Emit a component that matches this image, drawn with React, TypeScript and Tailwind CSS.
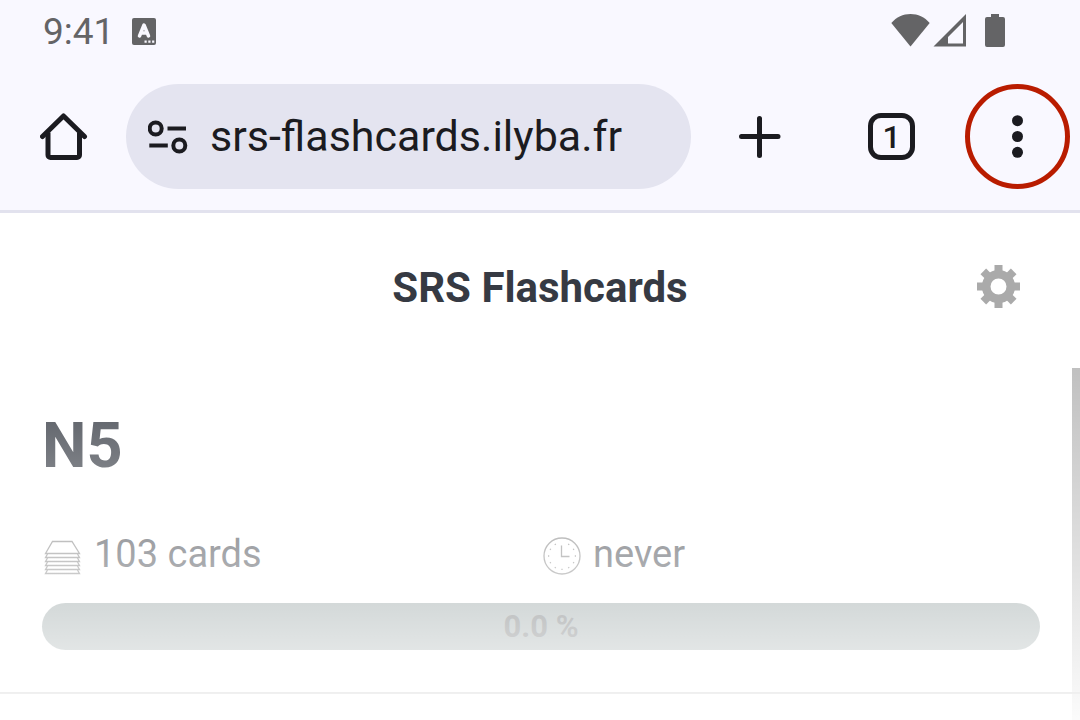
import React from "react";

function WifiIcon() {
  return (
    <svg viewBox="0 0 40 34" className="h-[34px] w-10" fill="#646466" aria-hidden="true">
      <path d="M20.500 33.500 1.300 10C6.500 4 13 1 20.500 1s14 3 19.200 9z" />
    </svg>
  );
}

function SignalIcon() {
  return (
    <svg viewBox="0 0 34 34" className="size-[34px]" aria-hidden="true">
      <path fill="#646466" fillRule="evenodd" d="M33 1v32.500H.5zM30 9 15 24v6.500h15z" />
    </svg>
  );
}

function BatteryIcon() {
  return (
    <svg viewBox="0 0 20 34" className="h-[34px] w-5" fill="#646466" aria-hidden="true">
      <path d="M6 1h8v3h4a2 2 0 0 1 2 2v26a2 2 0 0 1-2 2H2a2 2 0 0 1-2-2V6a2 2 0 0 1 2-2h4z" />
    </svg>
  );
}

function KeyboardIcon() {
  return (
    <svg viewBox="0 0 24 27" className="h-[27px] w-6" aria-hidden="true">
      <rect width="24" height="27" rx="2" fill="#646466" />
      <path d="M7.500 18 12 7l4.500 11M9 15h6" fill="none" stroke="#f9f8ff" strokeWidth="3.500" strokeLinecap="round" strokeLinejoin="round" />
      <path d="M12.500 22.500h2.200v2.200h-2.200zM16.300 22.500h2.200v2.200h-2.200zM20.100 22.500h2.200v2.200h-2.200z" fill="#f9f8ff" />
    </svg>
  );
}

function HomeIcon() {
  return (
    <svg viewBox="0 0 48 48" className="size-12" fill="none" stroke="#1b1b20" strokeWidth="5" aria-hidden="true">
      <path d="M8 19.500v22.500a2.500 2.500 0 0 0 2.500 2.500h26.500a2.500 2.500 0 0 0 2.500-2.500V19.500" />
      <path d="M2.500 23.500 23.500 3l21 20.500" strokeLinecap="round" strokeLinejoin="round" />
    </svg>
  );
}

function SiteInfoIcon() {
  return (
    <svg viewBox="0 0 40 34" className="h-[34px] w-10" fill="none" stroke="#1b1b20" strokeWidth="4" aria-hidden="true">
      <circle cx="7.700" cy="8.500" r="6" />
      <path d="M19.500 8.500H38M1.300 25.500h18.500" />
      <circle cx="31.300" cy="25.500" r="6" />
    </svg>
  );
}

function PlusIcon() {
  return (
    <svg viewBox="0 0 42 42" className="size-[42px]" fill="none" stroke="#1b1b20" strokeWidth="5" strokeLinecap="round" aria-hidden="true">
      <path d="M20.500 2.500v37M2.500 20.500h36.500" />
    </svg>
  );
}

function MoreIcon() {
  return (
    <svg viewBox="0 0 12 43" className="h-[43px] w-3" fill="#1b1b20" aria-hidden="true">
      <circle cx="5.500" cy="5.700" r="5.500" />
      <circle cx="5.500" cy="21.500" r="5.500" />
      <circle cx="5.500" cy="37.300" r="5.500" />
    </svg>
  );
}

const TEETH = [0, 45, 90, 135, 180, 225, 270, 315];

function GearIcon() {
  return (
    <svg viewBox="0 0 44 44" className="size-11" aria-hidden="true">
      <circle cx="22.500" cy="21.500" r="12.300" fill="none" stroke="#aaa" strokeWidth="8.600" />
      {TEETH.map((angle) => (
        <rect key={angle} x="18.500" y="0" width="8" height="8" fill="#aaa" transform={`rotate(${angle} 22.500 21.500)`} />
      ))}
    </svg>
  );
}

const SHEETS = [16, 20, 24, 28, 32];

function CardsIcon() {
  return (
    <svg viewBox="0 0 38 38" className="size-[38px]" fill="none" stroke="#777" strokeWidth="1.300" aria-hidden="true">
      <path d="M8.500 4.500h19.500L35.500 16.500h-34z" />
      {SHEETS.map((y) => (
        <path key={y} d={`M3.500 ${y + 1} 1.500 ${y + 4.500}h34l-2-3.500`} />
      ))}
    </svg>
  );
}

const HOURS = [30, 60, 90, 120, 150, 180, 210, 240, 270, 300, 330];

function ClockIcon() {
  return (
    <svg viewBox="0 0 38 38" className="size-[38px]" fill="none" stroke="#777" strokeWidth="1.300" aria-hidden="true">
      <circle cx="19" cy="19" r="18" />
      <path d="M18.500 8.500v11h8" />
      {HOURS.map((angle) => (
        <path key={angle} d="M19 5v1.200" transform={`rotate(${angle} 19 19)`} />
      ))}
    </svg>
  );
}

function StatusBar() {
  return (
    <div className="flex h-[63px] items-center justify-between pr-[75px] pl-[43px]">
      <div className="flex items-center gap-[18px]">
        <span className="text-[37px] text-[#646466]">9:41</span>
        <KeyboardIcon />
      </div>
      <div className="flex items-center pb-1">
        <WifiIcon />
        <span className="ml-[3px]"><SignalIcon /></span>
        <span className="ml-[18px]"><BatteryIcon /></span>
      </div>
    </div>
  );
}

function BrowserBar() {
  return (
    <div className="flex items-center py-[21px] pr-[10px] pl-10 text-[#1b1b20]">
      <button type="button" aria-label="Home"><HomeIcon /></button>
      <div className="ml-[38px] flex h-[105px] min-w-0 flex-1 items-center gap-[22px] rounded-full bg-[#e4e4f0] pr-8 pl-[22px]">
        <button type="button" aria-label="Site information" className="shrink-0"><SiteInfoIcon /></button>
        <input
          type="text"
          aria-label="Address"
          defaultValue="srs-flashcards.ilyba.fr"
          className="min-w-0 flex-1 bg-transparent text-[43px] outline-none"
        />
      </div>
      <button type="button" aria-label="New tab" className="ml-12"><PlusIcon /></button>
      <button
        type="button"
        aria-label="Open tabs"
        className="ml-[87px] flex size-[47px] items-center justify-center rounded-[13px] border-5 border-[#1b1b20] text-[32px] leading-none font-medium"
      >
        1
      </button>
      <button
        type="button"
        aria-label="Menu"
        className="ml-[50px] flex size-[105px] items-center justify-center rounded-full border-5 border-[#b91c00]"
      >
        <MoreIcon />
      </button>
    </div>
  );
}

function DeckCard() {
  return (
    <section className="border-b-2 border-[#777] pt-[42px] pr-10 pb-[42px] pl-[42px]">
      <h2 className="text-[63px] leading-[72px] font-bold text-[#31363f]">N5</h2>
      <div className="mt-12 grid grid-cols-2 text-[38px] leading-[48px] text-[#30343c]">
        <div className="flex items-center gap-3 pl-[2px]">
          <span className="pt-1"><CardsIcon /></span>
          <span>103 cards</span>
        </div>
        <div className="flex items-center gap-3 pl-[2px]">
          <span className="pt-1"><ClockIcon /></span>
          <span>never</span>
        </div>
      </div>
      <div
        role="progressbar"
        aria-label="Progress"
        aria-valuenow={0}
        aria-valuemin={0}
        aria-valuemax={100}
        className="mt-[25px] flex h-[47px] items-center justify-center rounded-full bg-[#788888] pt-[2px] text-[31px] font-bold text-[#343a3c]"
      >
        0.0 %
      </div>
    </section>
  );
}

export default function App() {
  return (
    <div className="flex min-h-screen flex-col bg-white font-['Roboto',sans-serif]">
      <div className="border-b-3 border-[#e2e2ee] bg-[#f9f8ff]">
        <StatusBar />
        <BrowserBar />
      </div>
      <header className="grid h-[155px] grid-cols-[1fr_auto_1fr] items-center px-[60px] pb-2">
        <h1 className="col-start-2 pt-[2px] text-[42px] font-bold text-[#363a43]">SRS Flashcards</h1>
        <button type="button" aria-label="Settings" className="justify-self-end"><GearIcon /></button>
      </header>
      <main className="relative flex-1">
        <div className="absolute inset-y-0 right-0 w-2 bg-[#b7b7b7]" />
        <div className="relative">
          <DeckCard />
        </div>
        <div className="pointer-events-none absolute inset-0 bg-linear-to-b from-white/13 to-white/95" />
      </main>
    </div>
  );
}
